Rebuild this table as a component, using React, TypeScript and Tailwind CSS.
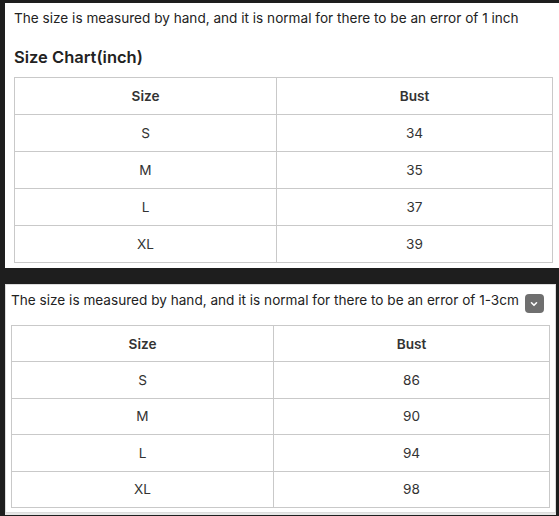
import React from "react";

type Row = { size: string; bust: string };

const inchRows: Row[] = [
  { size: "S", bust: "34" },
  { size: "M", bust: "35" },
  { size: "L", bust: "37" },
  { size: "XL", bust: "39" },
];

const cmRows: Row[] = [
  { size: "S", bust: "86" },
  { size: "M", bust: "90" },
  { size: "L", bust: "94" },
  { size: "XL", bust: "98" },
];

const SizeTable: React.FC<{ rows: Row[]; tall?: boolean }> = ({ rows, tall }) => {
  const cell = tall ? "h-[37px]" : "h-[36.4px]";
  return (
    <table className="w-full border-collapse table-fixed text-[13.6px] text-[#333]">
      <thead>
        <tr>
          <th className={`${cell} w-[262px] border border-[#c9c9c9] font-semibold`}>Size</th>
          <th className={`${cell} border border-[#c9c9c9] font-semibold`}>Bust</th>
        </tr>
      </thead>
      <tbody>
        {rows.map((r) => (
          <tr key={r.size}>
            <td className={`${cell} border border-[#c9c9c9] text-center`}>{r.size}</td>
            <td className={`${cell} border border-[#c9c9c9] text-center`}>{r.bust}</td>
          </tr>
        ))}
      </tbody>
    </table>
  );
};

export default function App() {
  return (
    <div
      className="w-[559px] h-[516px] overflow-hidden bg-[#1e1e1e] pt-[3px] pl-[5px]"
      style={{ fontFamily: "Inter, 'Liberation Sans', sans-serif" }}
    >
      <div className="bg-white h-[265px] pl-[9px] pr-[6px] pt-[5px]">
        <p className="text-[13.6px] leading-[20px] text-[#222]">
          The size is measured by hand, and it is normal for there to be an error of 1 inch
        </p>
        <h3 className="mt-[18px] text-[16.5px] leading-[22px] font-semibold text-[#222]">
          Size Chart(inch)
        </h3>
        <div className="mt-[9px]">
          <SizeTable rows={inchRows} tall />
        </div>
      </div>

      <div className="mt-[16px] w-[551px] h-[229px] bg-white border border-[#dcdcdc] px-[5px] pt-[5px] shadow-[0_2px_0_#e6e6e6]">
        <div className="flex items-start gap-[6px]">
          <p className="text-[13.6px] leading-[20px] text-[#222] whitespace-nowrap">
            The size is measured by hand, and it is normal for there to be an error of 1-3cm
          </p>
          <span className="mt-[4px] flex items-center justify-center w-[19px] h-[19px] rounded-[4px] bg-[#6f6f6f]">
            <svg width="10" height="10" viewBox="0 0 10 10">
              <path d="M2.5 3.8 L5 6.3 L7.5 3.8" fill="none" stroke="white" strokeWidth="1.6" strokeLinecap="round" strokeLinejoin="round" />
            </svg>
          </span>
        </div>
        <div className="mt-[12px]">
          <SizeTable rows={cmRows} />
        </div>
      </div>
    </div>
  );
}
